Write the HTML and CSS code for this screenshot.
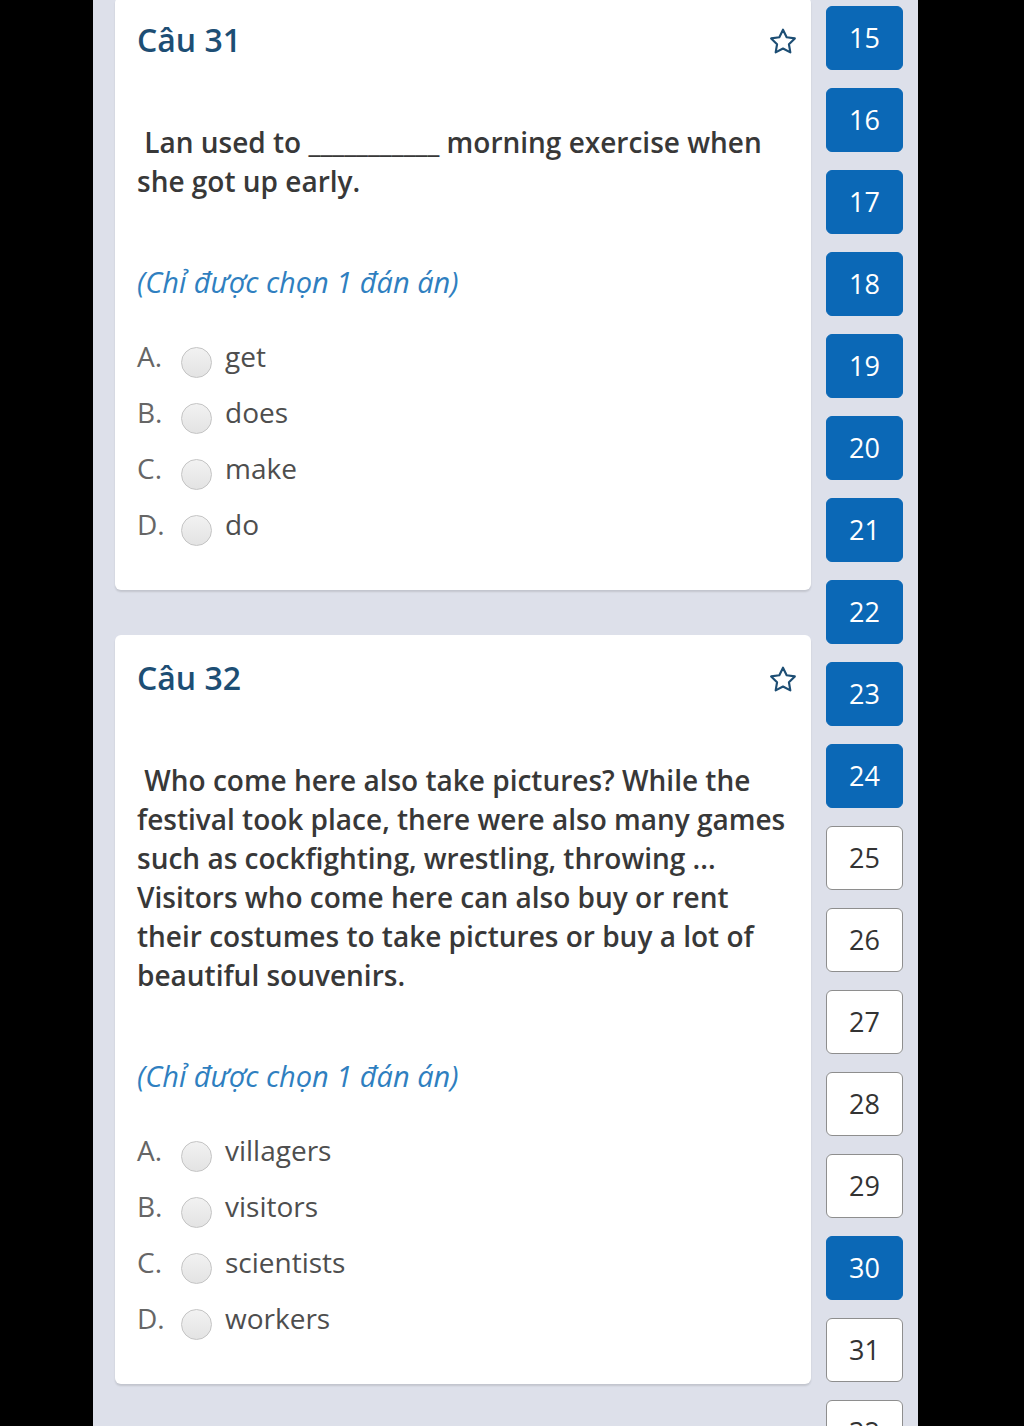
FILE: index.html
```html
<!DOCTYPE html>
<html lang="vi">
<head>
<meta charset="utf-8">
<title>Câu hỏi</title>
<link rel="stylesheet" href="styles.css">
</head>
<body>
<div class="screen">
  <div class="main">
    <div class="card">
      <div class="card-head">
        <h2 class="title">Câu 31</h2>
        <svg class="star" viewBox="0 0 24 24" width="32" height="32"><path d="M12 2.8l2.75 5.6 6.15.9-4.45 4.35 1.05 6.1L12 16.85 6.5 19.75l1.05-6.1L3.1 9.3l6.15-.9z" fill="none" stroke="#1d4e74" stroke-width="1.6" stroke-linejoin="round"/></svg>
      </div>
      <p class="question">&nbsp;Lan used to ___________ morning exercise when she got up early.</p>
      <p class="hint">(Chỉ được chọn 1 đán án)</p>
      <ul class="options">
        <li class="option"><span class="letter">A.</span><span class="radio"></span><span class="answer">get</span></li>
        <li class="option"><span class="letter">B.</span><span class="radio"></span><span class="answer">does</span></li>
        <li class="option"><span class="letter">C.</span><span class="radio"></span><span class="answer">make</span></li>
        <li class="option"><span class="letter">D.</span><span class="radio"></span><span class="answer">do</span></li>
      </ul>
    </div>
    <div class="card">
      <div class="card-head">
        <h2 class="title">Câu 32</h2>
        <svg class="star" viewBox="0 0 24 24" width="32" height="32"><path d="M12 2.8l2.75 5.6 6.15.9-4.45 4.35 1.05 6.1L12 16.85 6.5 19.75l1.05-6.1L3.1 9.3l6.15-.9z" fill="none" stroke="#1d4e74" stroke-width="1.6" stroke-linejoin="round"/></svg>
      </div>
      <p class="question">&nbsp;Who come here also take pictures? While the festival took place, there were also many games such as cockfighting, wrestling, throwing ... Visitors who come here can also buy or rent their costumes to take pictures or buy a lot of beautiful souvenirs.</p>
      <p class="hint">(Chỉ được chọn 1 đán án)</p>
      <ul class="options">
        <li class="option"><span class="letter">A.</span><span class="radio"></span><span class="answer">villagers</span></li>
        <li class="option"><span class="letter">B.</span><span class="radio"></span><span class="answer">visitors</span></li>
        <li class="option"><span class="letter">C.</span><span class="radio"></span><span class="answer">scientists</span></li>
        <li class="option"><span class="letter">D.</span><span class="radio"></span><span class="answer">workers</span></li>
      </ul>
    </div>
  </div>
  <nav class="sidebar">
    <a class="num done">15</a>
    <a class="num done">16</a>
    <a class="num done">17</a>
    <a class="num done">18</a>
    <a class="num done">19</a>
    <a class="num done">20</a>
    <a class="num done">21</a>
    <a class="num done">22</a>
    <a class="num done">23</a>
    <a class="num done">24</a>
    <a class="num">25</a>
    <a class="num">26</a>
    <a class="num">27</a>
    <a class="num">28</a>
    <a class="num">29</a>
    <a class="num done">30</a>
    <a class="num">31</a>
    <a class="num">32</a>
  </nav>
</div>
</body>
</html>
```

FILE: styles.css
```css
html, body {
  margin: 0;
  padding: 0;
  background: #000;
  overflow: hidden;
}
body {
  font-family: "Open Sans", "Noto Sans", sans-serif;
  height: 1426px;
}
.screen {
  margin-left: 93px;
  width: 825px;
  height: 1426px;
  background: #dde0ea;
  display: flex;
  overflow: hidden;
}
.main {
  width: 696px;
  margin-left: 22px;
  margin-top: -3px;
  display: flex;
  flex-direction: column;
  gap: 45px;
}
.card {
  background: #fff;
  border-radius: 6px;
  box-shadow: 0 2px 2px rgba(0,0,0,0.12);
  padding: 23px 22px 38px 22px;
}
.card-head {
  display: flex;
  align-items: center;
  justify-content: space-between;
  height: 40px;
}
.title {
  margin: 0;
  font-size: 32px;
  font-weight: 600;
  line-height: 40px;
  color: #1d4e74;
}
.star {
  margin-right: -10px;
  margin-top: 3px;
}
.question {
  margin: 63px 0 0 0;
  font-size: 28px;
  line-height: 39px;
  font-weight: 600;
  color: #383838;
}
.hint {
  margin: 61px 0 0 0;
  font-size: 29px;
  line-height: 39px;
  font-style: italic;
  color: #2f7fc0;
}
.options {
  list-style: none;
  margin: 27px 0 0 0;
  padding: 0;
}
.option {
  display: flex;
  align-items: center;
  height: 56px;
  font-size: 28px;
  color: #555;
}
.letter {
  width: 44px;
  color: #666;
}
.radio {
  width: 29px;
  height: 29px;
  border-radius: 50%;
  border: 1px solid #c4c4c4;
  background: linear-gradient(#f2f2f2, #e3e3e3);
  margin-top: 12px;
  margin-right: 13px;
  flex: none;
}
.answer {
  color: #4e4e4e;
}
.sidebar {
  width: 77px;
  margin-left: 15px;
  padding-top: 6px;
  display: flex;
  flex-direction: column;
  gap: 18px;
}
.num {
  box-sizing: border-box;
  height: 64px;
  flex: none;
  border-radius: 6px;
  border: 1px solid #8e8e8e;
  background: #fff;
  color: #333;
  font-size: 27px;
  display: flex;
  align-items: center;
  justify-content: center;
  padding-bottom: 2px;
}
.num.done {
  background: #0b68b6;
  border-color: #0b68b6;
  color: #fff;
}
```
